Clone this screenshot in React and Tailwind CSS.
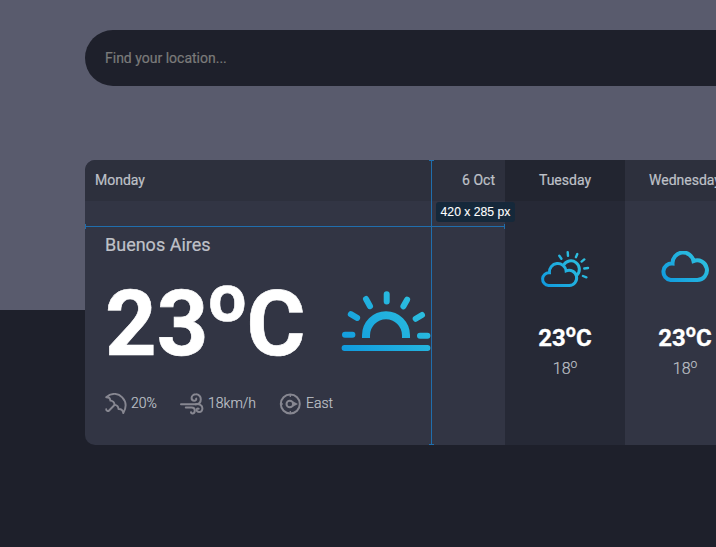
import React from "react";

function Gradient({ id, x1, y1, x2, y2 }) {
  return (
    <defs>
      <linearGradient id={id} gradientUnits="userSpaceOnUse" x1={x1} y1={y1} x2={x2} y2={y2}>
        <stop offset="0" stopColor="#109ade" />
        <stop offset="1" stopColor="#2fc2df" />
      </linearGradient>
    </defs>
  );
}

function Sunrise() {
  return (
    <svg width="90" height="62" viewBox="341 290 90 62" fill="none" stroke="url(#rise)" strokeLinecap="round" className="block">
      <Gradient id="rise" x1="350" y1="358" x2="418" y2="290" />
      <path d="M344.6 348.01L427.4 348" strokeWidth="6" />
      <path d="M366 338v-2.8a20 20 0 0 1 40 0v2.8" strokeWidth="8" strokeLinecap="butt" />
      <path
        d="M386.7 294.2v7.4M366 299l4 7.2M407.1 299.7l-3.7 6.6M350.8 314.2l6.3 3.7M422 315l-6.3 3.8M345 334.8h7.4M420 335.7h7.4"
        strokeWidth="6"
      />
    </svg>
  );
}

function CloudSun() {
  return (
    <svg width="50" height="38" viewBox="540 250 50 38" fill="none" stroke="url(#cs)" strokeWidth="3" className="block">
      <Gradient id="cs" x1="545" y1="288" x2="582" y2="254" />
      <path d="M548.6 285.5H569.3a7.6 7.6 0 1 0-3.2-14.6 8.4 8.4 0 0 0-16.7 1.8 6.4 6.4 0 0 0-.8 12.8z" />
      <path d="M563.5 265.4a8.4 8.4 0 1 1 13.2 10" />
      <path
        strokeWidth="2.4"
        strokeLinecap="round"
        d="M559.3 255.7l2.1 3M567.7 252.2l.3 3.7M577.3 254l-1.4 3.2M584.3 259.4l-2.7 2.2M584.3 268.5l3.7-.5M583 276l3.4 1.3"
      />
    </svg>
  );
}

function Cloud() {
  return (
    <svg width="50" height="32" viewBox="660 251 50 32" fill="none" stroke="url(#cl)" strokeWidth="4" className="block">
      <Gradient id="cl" x1="666" y1="284" x2="700" y2="250" />
      <path d="M670.7 280H697.2a9.8 9.8 0 1 0-3.7-18.9 10.6 10.6 0 0 0-21 2.4 8.3 8.3 0 0 0-1.8 16.5z" />
    </svg>
  );
}

function Umbrella() {
  return (
    <svg width="22" height="22" viewBox="0 0 22 22" fill="none" stroke="#878791" strokeWidth="1.9" strokeLinecap="round" strokeLinejoin="round">
      <path d="M1.2 4.2C7-.8 13.5.4 17.2 4.3c4.1 4.3 4.4 10 1.1 15.8-.5-2.900-2-4.300-4.800-4.100-.1-2.300-1.400-3.900-3.900-4.100-.2-2.600-1.500-4.200-4.200-4.300C5.300 5.300 4 4.100 1.200 4.200z" />
      <path d="M9.500 12l-5.400 5.500c-1 1.100-3 .4-2.900-1.200" />
    </svg>
  );
}

function Wind() {
  return (
    <svg width="24" height="22" viewBox="0 0 24 22" fill="none" stroke="#878791" strokeWidth="2" strokeLinecap="round">
      <path d="M1 11.200h14.800c3.200 0 5-2.200 5-5A4.700 4.700 0 0 0 16 1.300c-2.600 0-4.400 1.700-4.400 3.700s1.400 2.800 2.700 2.800 2.300-1 1.900-2.200" />
      <path d="M15.800 11.200c3.300-.6 6.600.8 6.600 4 0 2.300-1.400 3.800-3.300 3.800-1.600 0-2.600-1-2.500-2.200s1.300-1.700 2.100-1.100" />
      <path d="M5.800 14.600h5.800c2 0 3.200 1.200 3.200 2.900 0 1.800-1.200 2.900-2.400 2.900-.9 0-1.500-.5-1.400-1.200" />
    </svg>
  );
}

function Compass() {
  return (
    <svg width="22" height="22" viewBox="0 0 22 22" fill="none" stroke="#878791" strokeWidth="2">
      <circle cx="11.300" cy="11" r="9.500" />
      <circle cx="10.800" cy="11" r="3.300" />
      <path d="M11.300 1v3M11.300 18v3M1.300 11h2.500" strokeWidth="1.300" />
      <path d="M13.300 7.900L19 11l-5.700 3.100z" fill="#878791" stroke="none" />
    </svg>
  );
}

function Day({ name, icon, iconTop, shade, head }) {
  return (
    <section className={`flex h-full w-[120px] shrink-0 flex-col items-center ${shade}`}>
      <header className={`h-[41px] w-full text-center text-sm leading-[40px] font-normal ${head}`}>{name}</header>
      <div className={`flex h-[121px] w-full justify-center ${iconTop}`}>{icon}</div>
      <div className="h-[35px] text-2xl leading-[33px] font-bold text-white [-webkit-text-stroke:0.3px]">
        23<sup className="relative top-[-0.5em] text-[75%] leading-none align-baseline">o</sup>C
      </div>
      <div className="h-6 text-base leading-6 font-light">
        18<sup className="relative top-[-0.5em] text-[75%] leading-none align-baseline">o</sup>
      </div>
    </section>
  );
}

export default function App() {
  return (
    <main className="h-[547px] w-[716px] overflow-hidden bg-[#1e202b] font-['Roboto',sans-serif] text-[#bfc1c8] [-webkit-text-stroke:0.2px]">
      <div className="h-[310px] bg-[#595b6d] pt-[30px] pl-[85px]">
        <div className="flex h-14 w-[950px] items-center rounded-full bg-[#1e202b] pl-5 text-sm text-[#7b7b7a]">
          Find your location...
        </div>
        <div className="relative mt-[74px] flex h-[285px] w-[1140px] overflow-hidden rounded-[10px]">
          <section className="h-full w-[420px] shrink-0 bg-[#323544]">
            <header className="flex h-[41px] justify-between bg-[#2d303d] px-2.5 text-sm leading-[40px]">
              <span>Monday</span>
              <span>6 Oct</span>
            </header>
            <div className="px-5 pt-[31px]">
              <div className="h-[25px] text-lg leading-[25px]">Buenos Aires</div>
              <div className="flex h-[132px]">
                <div className="w-[236px] pt-[23px] text-[90px] leading-[90px] font-bold text-white [-webkit-text-stroke:0.6px]">
                  23<sup className="relative top-[-0.5em] text-[75%] leading-none align-baseline">o</sup>C
                </div>
                <div className="pt-[33px]"><Sunrise /></div>
              </div>
              <div className="flex h-[30px] items-center text-sm font-light">
                <div className="flex w-[75px] items-center gap-1"><Umbrella /><span className="pb-0.5">20%</span></div>
                <div className="flex w-[99px] items-center gap-1"><Wind /><span className="pb-0.5">18km/h</span></div>
                <div className="flex items-center gap-[5px]"><Compass /><span className="pb-0.5">East</span></div>
              </div>
            </div>
          </section>
          <Day name="Tuesday" icon={<CloudSun />} iconTop="pt-[49px]" shade="bg-[#262936]" head="bg-[#222530]" />
          <Day name="Wednesday" icon={<Cloud />} iconTop="pt-[50px]" shade="bg-[#323544]" head="bg-[#2d303d]" />

          {/* Measurement guides over the card */}
          <div className="absolute top-[66px] left-0 h-px w-[420px] bg-[#206ead]" />
          <div className="absolute top-[64px] left-0 h-[5px] w-px bg-[#206ead]" />
          <div className="absolute top-[64px] left-[419px] h-[5px] w-px bg-[#206ead]" />
          <div className="absolute top-0 left-[346px] h-[285px] w-px bg-[#206ead]" />
          <div className="absolute top-0 left-[344px] h-px w-[5px] bg-[#206ead]" />
          <div className="absolute top-[284px] left-[344px] h-px w-[5px] bg-[#206ead]" />
          <div className="absolute top-[42px] left-[351px] h-5 w-[79px] rounded-[3px] bg-[#15283a] text-center font-['Liberation_Sans',Arial,sans-serif] text-[12.2px] leading-5 whitespace-nowrap text-white [-webkit-text-stroke:0.1px]">
            420 x 285 px
          </div>
        </div>
      </div>
    </main>
  );
}
